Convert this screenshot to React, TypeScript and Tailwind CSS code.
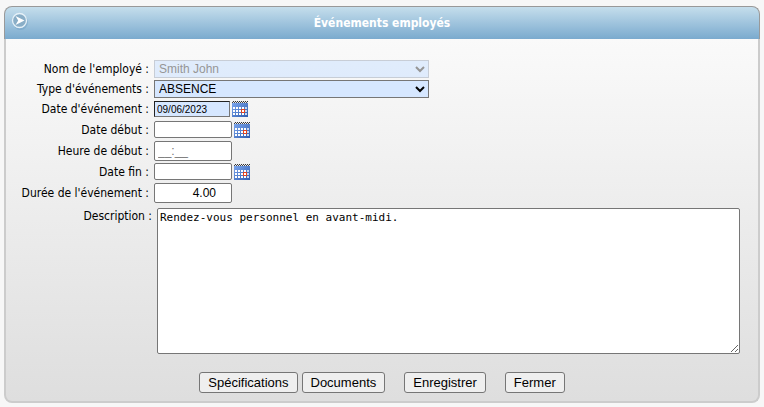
import React from "react";

const EVENT_TYPES = ["ABSENCE", "RETARD", "VACANCES"];

const labelText = "text-right text-[12px] leading-[16px] text-black";
const fieldBase =
  "rounded-[2px] border border-[#767676] bg-white px-[3px] text-black font-['Liberation_Sans',Arial,sans-serif]";
const selectBase =
  "h-[18px] w-[275px] border font-['Liberation_Sans',Arial,sans-serif] text-[12px] leading-[16px]";

function ArrowIcon() {
  return (
    <svg width="20" height="20" viewBox="0 0 20 20" aria-hidden="true">
      <circle cx="10.5" cy="11.5" r="7.5" fill="#5b8fb5" opacity="0.3" />
      <circle cx="9.5" cy="9.5" r="7" fill="#8aaec7" stroke="#e6f1f8" strokeWidth="1.3" />
      <path d="M5.5 5 L14.5 9.5 L5.5 14 L8.2 9.5 Z" fill="#fff" />
    </svg>
  );
}

function CalendarIcon() {
  return (
    <svg width="16" height="16" viewBox="0 0 16 16" shapeRendering="crispEdges" aria-hidden="true">
      <defs>
        <linearGradient id="calendar-body" x1="0" y1="0" x2="1" y2="1">
          <stop offset="0" stopColor="#7ba6ee" />
          <stop offset="1" stopColor="#2f5cae" />
        </linearGradient>
      </defs>
      <rect x="0" y="2" width="16" height="14" fill="url(#calendar-body)" />
      {[1, 4, 7, 10, 13].map((x) =>
        [6, 9, 12].map((y) => (
          <rect key={`${x}-${y}`} x={x} y={y} width="2" height="2" fill={x === 13 ? "#c9d8f0" : "#fff"} />
        ))
      )}
      <rect x="0" y="0" width="16" height="2" fill="#e9ebf0" />
      {[0, 2, 4, 6, 8, 10, 12, 14].map((x) => (
        <g key={x}>
          <rect x={x + 1} y="0" width="1" height="1" fill="#333" />
          <rect x={x} y="1" width="1" height="1" fill="#444" />
        </g>
      ))}
      <rect x="9" y="8" width="4" height="4" fill="#e2431e" />
      <rect x="10" y="9" width="2" height="2" fill="#fff" />
    </svg>
  );
}

function CalendarButton({ label }: { label: string }) {
  return (
    <button type="button" aria-label={label} className="ml-[2px] cursor-pointer">
      <CalendarIcon />
    </button>
  );
}

type RowProps = {
  id: string;
  label: string;
  className?: string;
  children: React.ReactNode;
};

function Row({ id, label, className = "h-[21px]", children }: RowProps) {
  return (
    <div className={`flex items-center ${className}`}>
      <label htmlFor={id} className={`mr-[5px] w-[143px] ${labelText}`}>
        {label} :
      </label>
      {children}
    </div>
  );
}

function ActionButton({ children, className = "" }: { children: string; className?: string }) {
  return (
    <button
      type="button"
      className={`h-[21px] rounded-[3px] border border-[#767676] bg-[#efefef] px-2 font-['Liberation_Sans',Arial,sans-serif] text-[13px] leading-[19px] text-black ${className}`}
    >
      {children}
    </button>
  );
}

export default function App() {
  return (
    <main className="min-h-screen bg-[#f7f7f7] px-1 pt-[6px] pb-1 font-['DejaVu_Sans_Condensed','DejaVu_Sans',sans-serif]">
      <header className="relative flex h-[33px] items-center justify-center rounded-t-[8px] border border-b-0 border-[#999] bg-linear-to-b from-[#c5deec] to-[#7aaace]">
        <button type="button" aria-label="Retour" className="absolute top-1 left-[5px]">
          <ArrowIcon />
        </button>
        <h1 className="text-[12px] leading-[16px] font-bold text-white">Événements employés</h1>
      </header>

      <form className="rounded-b-[8px] border-2 border-t-0 border-[#ccc] bg-linear-to-b from-[#fafafa] to-[#dedede] pt-5 pb-2">
        <Row id="employe" label="Nom de l'employé" className="h-5">
          <select id="employe" disabled className={`${selectBase} border-[#b4bcc9] bg-[#d6e7ff] text-[#6d6d6d] opacity-70`}>
            <option>Smith John</option>
          </select>
        </Row>
        <Row id="type" label="Type d'événements" className="h-5">
          <select id="type" className={`${selectBase} border-[#767676] bg-[#d6e7ff] text-black`}>
            {EVENT_TYPES.map((type) => (
              <option key={type}>{type}</option>
            ))}
          </select>
        </Row>
        <Row id="date" label="Date d'événement" className="h-5">
          <input
            id="date"
            defaultValue="09/06/2023"
            className="h-4 w-[76px] border border-t-[#222] border-r-[#767676] border-b-[#767676] border-l-[#222] bg-[#d6e7ff] px-[2px] font-['Liberation_Sans',Arial,sans-serif] text-[10px] text-black"
          />
          <CalendarButton label="Choisir la date d'événement" />
        </Row>
        <Row id="debut" label="Date début">
          <input id="debut" className={`${fieldBase} h-[17px] w-[78px] text-[10px]`} />
          <CalendarButton label="Choisir la date de début" />
        </Row>
        <Row id="heure" label="Heure de début">
          <input
            id="heure"
            placeholder="__:__"
            className={`${fieldBase} h-5 w-[78px] text-[12px] placeholder:text-[#757575]`}
          />
        </Row>
        <Row id="fin" label="Date fin">
          <input id="fin" className={`${fieldBase} h-[17px] w-[78px] text-[10px]`} />
          <CalendarButton label="Choisir la date de fin" />
        </Row>
        <Row id="duree" label="Durée de l'événement">
          <input
            id="duree"
            defaultValue="4.00"
            className={`${fieldBase} h-5 w-[78px] pr-[15px] text-right text-[12px]`}
          />
        </Row>

        <div className="mt-[5px] flex items-start pr-[18px]">
          <label htmlFor="description" className={`mr-[5px] w-[146px] ${labelText}`}>
            Description :
          </label>
          <textarea
            id="description"
            defaultValue="Rendez-vous personnel en avant-midi."
            className="h-[146px] flex-1 resize rounded-[2px] border border-[#767676] bg-white px-[2px] py-[2px] font-['DejaVu_Sans_Mono',monospace] text-[11px] leading-[14px] text-black"
          />
        </div>

        <div className="mt-[18px] flex justify-center">
          <ActionButton>Spécifications</ActionButton>
          <ActionButton className="ml-1">Documents</ActionButton>
          <ActionButton className="ml-[19px]">Enregistrer</ActionButton>
          <ActionButton className="ml-[19px]">Fermer</ActionButton>
        </div>
      </form>
    </main>
  );
}
